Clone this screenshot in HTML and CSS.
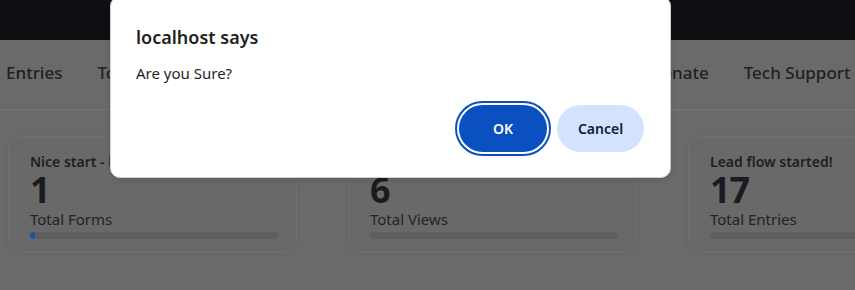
FILE: index.html
```html
<!DOCTYPE html>
<html>
<head>
<meta charset="utf-8">
<link rel="stylesheet" href="styles.css">
</head>
<body>
<div class="topbar"></div>
<nav class="nav">
  <span class="nav-item">Entries</span>
  <span class="nav-item">Tools</span>
  <span class="nav-item">Settings</span>
  <span class="nav-item">Extensions</span>
  <span class="nav-item">Payments</span>
  <span class="nav-item">Integrations</span>
  <span class="nav-item">Donate</span>
  <span class="nav-item">Tech Support</span>
</nav>
<main class="cards">
  <div class="card">
    <div class="card-title">Nice start - keep going!</div>
    <div class="card-num">1</div>
    <div class="card-label">Total Forms</div>
    <div class="bar"><div class="bar-fill" style="width:5px"></div></div>
  </div>
  <div class="card">
    <div class="card-title">People are looking!</div>
    <div class="card-num">6</div>
    <div class="card-label">Total Views</div>
    <div class="bar"><div class="bar-fill" style="width:0"></div></div>
  </div>
  <div class="card">
    <div class="card-title">Lead flow started!</div>
    <div class="card-num">17</div>
    <div class="card-label">Total Entries</div>
    <div class="bar"><div class="bar-fill" style="width:0"></div></div>
  </div>
</main>
<div class="dialog">
  <div class="dialog-title">localhost says</div>
  <div class="dialog-msg">Are you Sure?</div>
  <div class="dialog-actions">
    <button class="btn btn-ok">OK</button>
    <button class="btn btn-cancel">Cancel</button>
  </div>
</div>
</body>
</html>
```
FILE: styles.css
```css
html, body {
  margin: 0;
  padding: 0;
}
body {
  background: #6a6a6a;
  font-family: "Noto Sans", "Open Sans", sans-serif;
  color: #1c1d20;
  width: 855px;
  height: 290px;
  overflow: hidden;
  position: relative;
}
.topbar {
  height: 40px;
  background: #0f1013;
}
.nav {
  height: 70px;
  box-sizing: border-box;
  padding: 0 0 5px 6px;
  border-bottom: 1px solid #747474;
  display: flex;
  align-items: center;
  gap: 35px;
  white-space: nowrap;
  overflow: hidden;
}
.nav-item {
  font-size: 17px;
  font-weight: 500;
  color: #202124;
}
.cards {
  display: flex;
  gap: 51px;
  padding: 26px 0 0 8px;
}
.card {
  flex: 0 0 289px;
  height: 117px;
  box-sizing: border-box;
  border-radius: 12px;
  background: #696969;
  border: 1px solid #6f6f6f;
  box-shadow: 0 1px 4px rgba(0,0,0,0.06);
  padding: 15px 18px 0 21px;
}
.card-title {
  font-size: 14px;
  font-weight: 600;
  line-height: 20px;
  color: #1f2023;
  white-space: nowrap;
  overflow: hidden;
}
.card-num {
  font-size: 36px;
  font-weight: 700;
  line-height: 36px;
  letter-spacing: -1px;
  color: #1a1b1e;
}
.card-label {
  font-size: 15px;
  line-height: 22px;
  color: #222326;
}
.bar {
  margin-top: 2px;
  height: 7px;
  border-radius: 4px;
  background: #5f5f5f;
  overflow: hidden;
}
.bar-fill {
  height: 100%;
  background: #1753a6;
  border-radius: 4px;
}
.dialog {
  position: absolute;
  left: 110px;
  top: -4px;
  width: 561px;
  height: 182px;
  box-sizing: border-box;
  background: #ffffff;
  border: 1px solid #d4cfcc;
  border-radius: 10px;
  box-shadow: 0 2px 6px rgba(0,0,0,0.12);
  padding: 28px 26px 0 25px;
}
.dialog-title {
  font-size: 18px;
  font-weight: 600;
  line-height: 24px;
  color: #1f1f1f;
}
.dialog-msg {
  margin-top: 14px;
  font-size: 15px;
  line-height: 20px;
  color: #1f1f1f;
}
.dialog-actions {
  display: flex;
  justify-content: flex-end;
  gap: 10px;
  margin-top: 22px;
}
.btn {
  height: 47px;
  width: 88px;
  border: none;
  border-radius: 24px;
  font-family: inherit;
  font-size: 14px;
  font-weight: 600;
}
.btn-ok {
  background: #0b50c0;
  color: #ffffff;
  outline: 2px solid #0b50c0;
  outline-offset: 2px;
}
.btn-cancel {
  width: 87px;
  background: #d3e3fd;
  color: #0e1d36;
}
```
